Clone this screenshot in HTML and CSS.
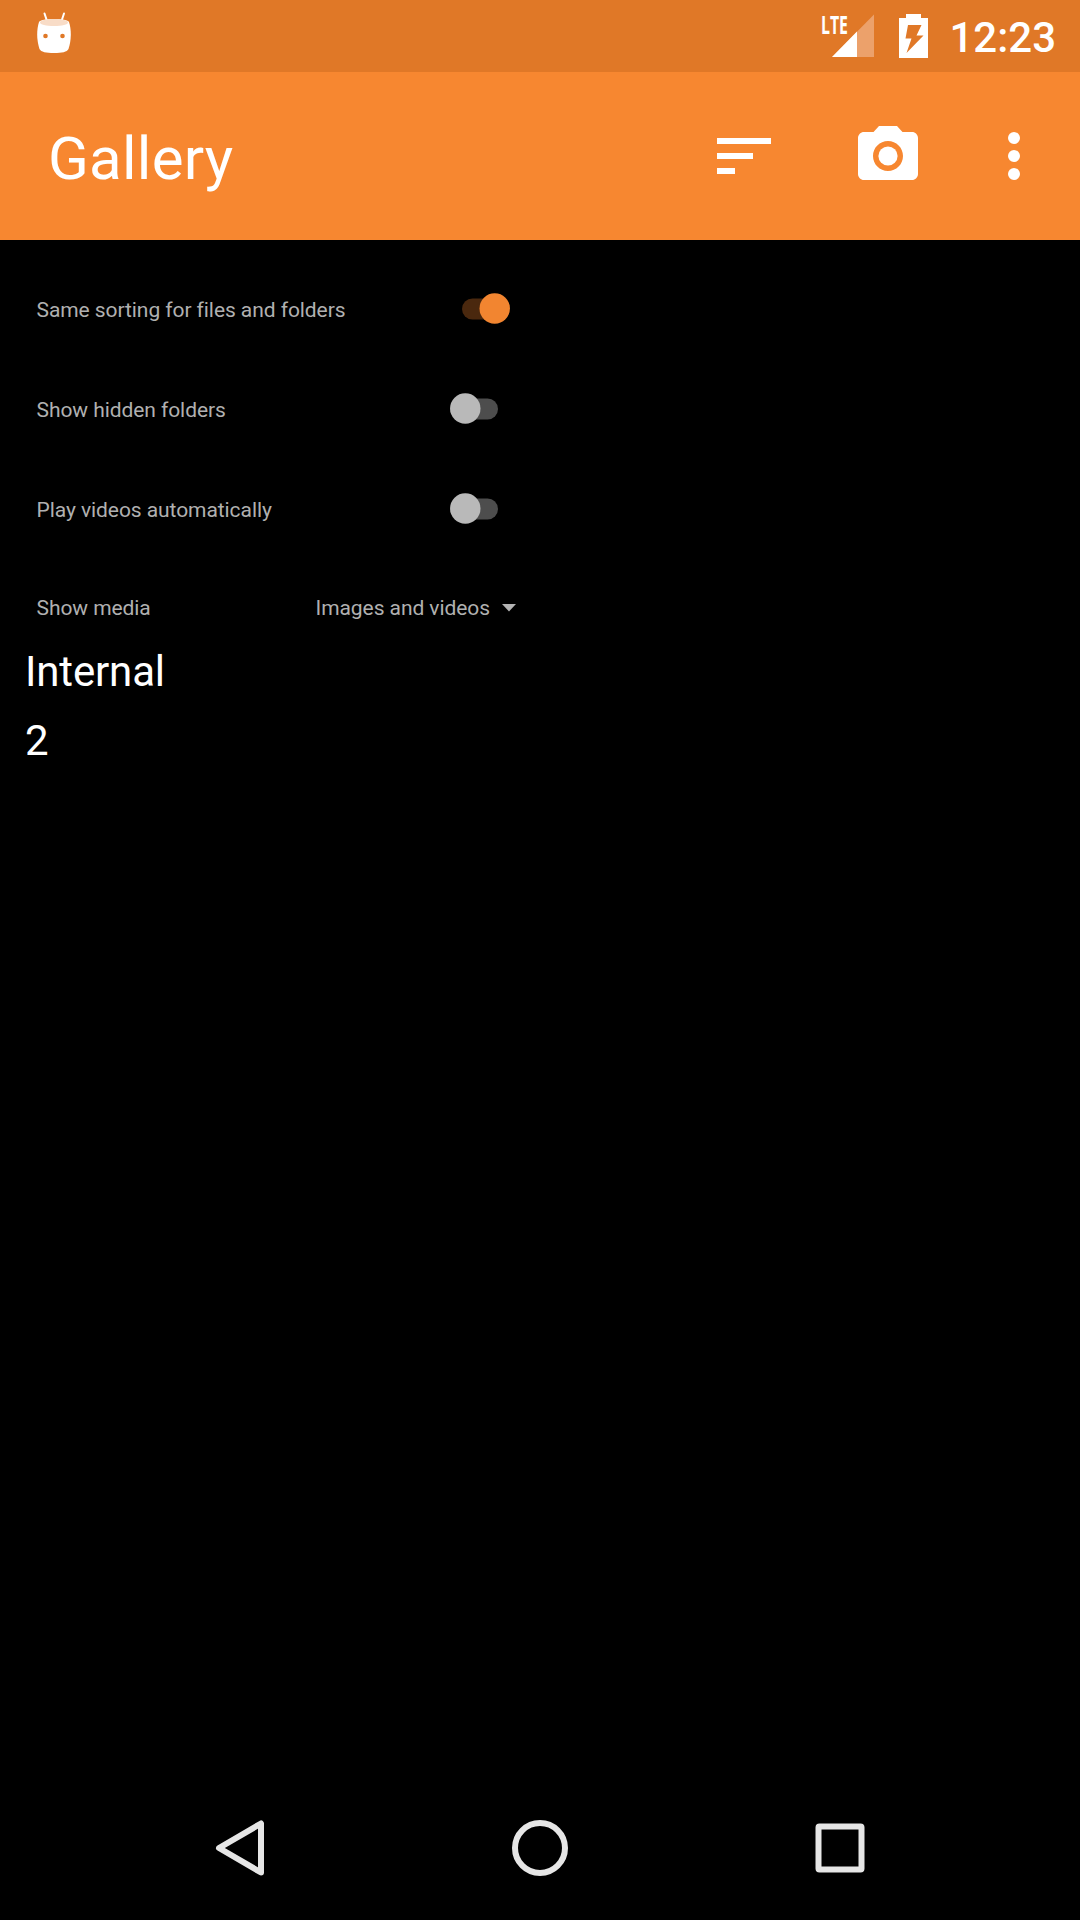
FILE: index.html
```html
<!DOCTYPE html>
<html lang="en">
<head>
<meta charset="utf-8">
<title>Gallery</title>
<link rel="stylesheet" href="styles.css">
</head>
<body>
<div class="screen">
  <div class="status">
    <svg class="notification" width="36" height="42" viewBox="0 0 36 42">
      <path d="M8.500 1.500L11 9M28 1.500L25.500 9" stroke="#fff" stroke-width="2" stroke-linecap="round"/>
      <path d="M3 10C4 8 10 7 18 7s14 1 15 3c2.500 8 2.500 18-.5 27C31 40 26 41 18 41S5 40 3.500 37C.5 28 .5 18 3 10z" fill="#fff"/>
      <path d="M4 10.500C4 8.500 10 7 18 7s14 1.500 14 3.500S26 14 18 14 4 12.500 4 10.500z" fill="#f8dcc7"/>
      <circle cx="9.500" cy="24" r="2.300" fill="#e07827"/><circle cx="26.500" cy="24" r="2.300" fill="#e07827"/>
    </svg>
    <div class="indicators">
      <svg class="signal" width="54" height="44" viewBox="0 0 54 44">
        <path d="M53 .5V43H11z" fill="#eca16b"/>
        <path d="M36 17.500V43H11z" fill="#fff"/>
        <text class="network" x="0" y="19.500" textLength="27" lengthAdjust="spacingAndGlyphs">LTE</text>
      </svg>
      <svg class="battery" width="29" height="44" viewBox="0 0 29 44">
        <path fill="#fff" fill-rule="evenodd" d="M7 0H22V4H29V44H0V4H7zM9 11 6.500 24.500H12.500L7.500 39 24.500 21.500H17.500L22.500 11z"/>
      </svg>
      <span class="clock">12:23</span>
    </div>
  </div>
  <header class="appbar">
    <h1 class="title">Gallery</h1>
    <div class="actions">
      <svg class="icon" viewBox="0 0 24 24"><path d="M3 18h6v-2H3v2zM3 6v2h18V6H3zm0 7h12v-2H3v2z"/></svg>
      <svg class="icon" viewBox="0 0 24 24"><circle cx="12" cy="12" r="3.200"/><path d="M9 2L7.170 4H4c-1.100 0-2 .9-2 2v12c0 1.100.9 2 2 2h16c1.100 0 2-.9 2-2V6c0-1.100-.9-2-2-2h-3.170L15 2H9zm3 15c-2.760 0-5-2.240-5-5s2.240-5 5-5 5 2.240 5 5-2.240 5-5 5z"/></svg>
      <svg class="icon more" viewBox="0 0 24 24"><circle cx="12" cy="6" r="2"/><circle cx="12" cy="12" r="2"/><circle cx="12" cy="18" r="2"/></svg>
    </div>
  </header>
  <main class="content">
    <div class="row"><span class="label">Same sorting for files and folders</span>
      <svg class="switch" width="60" height="32" viewBox="0 0 60 32"><rect x="12" y="5.500" width="48" height="21" rx="10.500" fill="#4a280e"/><circle cx="44.700" cy="15.500" r="15.200" fill="#f28530"/></svg></div>
    <div class="row"><span class="label">Show hidden folders</span>
      <svg class="switch" width="60" height="32" viewBox="0 0 60 32"><rect x="0" y="5.500" width="48" height="21" rx="10.500" fill="#4d4d4d"/><circle cx="15.300" cy="15.500" r="15.200" fill="#b9b9b9"/></svg></div>
    <div class="row"><span class="label">Play videos automatically</span>
      <svg class="switch" width="60" height="32" viewBox="0 0 60 32"><rect x="0" y="5.500" width="48" height="21" rx="10.500" fill="#4d4d4d"/><circle cx="15.300" cy="15.500" r="15.200" fill="#b9b9b9"/></svg></div>
    <div class="row media"><span>Show media</span>
      <span class="select">Images and videos <svg width="14" height="8" viewBox="0 0 14 8"><path d="M0 0H14L7 7.500z" fill="#b3b3b3"/></svg></span></div>
    <div class="storage">Internal</div>
    <div class="storage">2</div>
  </main>
  <nav class="navbar">
    <svg width="56" height="56" viewBox="0 0 56 56"><path d="M49 3.500V52.500L7 28z"/></svg>
    <svg width="56" height="56" viewBox="0 0 56 56"><circle cx="28" cy="28" r="25"/></svg>
    <svg width="56" height="56" viewBox="0 0 56 56"><rect x="6.500" y="6.500" width="43" height="43" rx="1"/></svg>
  </nav>
</div>
</body>
</html>
```
FILE: styles.css
```css
* { box-sizing: border-box; }
body { margin: 0; background: #000; font-family: Roboto, sans-serif; }
svg { display: block; flex: none; overflow: visible; }
.screen { width: 1080px; height: 1920px; display: flex; flex-direction: column; background: #000; overflow: hidden; }
.status { height: 72px; padding: 12px 24px 0 36px; background: #e07827; display: flex; justify-content: space-between; align-items: flex-start; }
.indicators { display: flex; align-items: flex-start; }
.signal { margin: 2px 24px 0 0; }
.network { font: bold 25px "Open Sans", sans-serif; fill: #fff; }
.battery { margin: 2px 21px 0 0; }
.clock { color: #fff; font-size: 42px; font-weight: 500; line-height: 52px; }
.appbar { height: 168px; padding: 0 30px 0 48px; background: #f78730; display: flex; justify-content: space-between; align-items: center; }
.title { margin: 0; padding-top: 5px; color: #fff; font-size: 60px; font-weight: 400; line-height: 72px; letter-spacing: .25px; }
.actions { display: flex; gap: 72px; }
.icon { width: 72px; height: 72px; fill: #fff; }
.more { margin-left: -18px; }
.content { flex: 1; padding-top: 19px; }
.row { width: 546px; height: 100px; padding: 0 36px; display: flex; align-items: center; justify-content: space-between; color: #b0b0b0; font-size: 21px; line-height: 24px; letter-spacing: -.07px; }
.label { padding-top: 2px; }
.row > span:first-child { padding-left: .5px; }
.media { height: 78px; padding: 20px 30px 0 36px; }
.select { display: flex; align-items: center; gap: 12px; }
.storage { height: 69px; padding-left: 25px; color: #fff; font-size: 42px; line-height: 69px; letter-spacing: -.15px; }
.navbar { height: 144px; padding: 0 212px; display: flex; justify-content: space-between; align-items: center; }
.navbar svg { fill: none; stroke: #e6e6e6; stroke-width: 6; stroke-linejoin: round; }
```
